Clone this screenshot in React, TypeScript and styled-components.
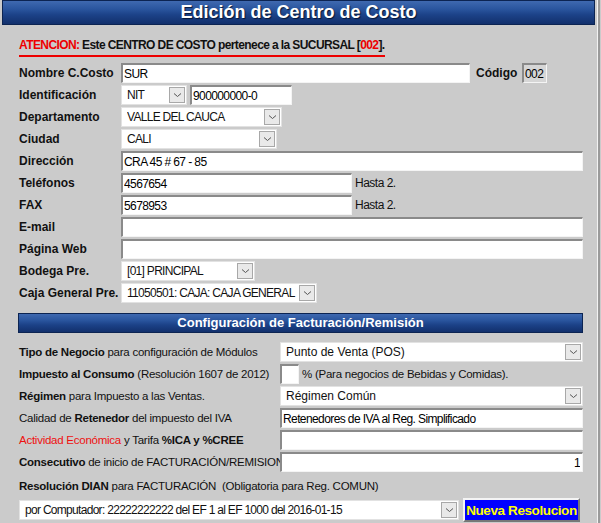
import styled, { createGlobalStyle } from "styled-components";

const GlobalStyle = createGlobalStyle`
  body {
    margin: 0;
    background: #cbcbcb;
    font-family: "Liberation Sans", Arial, sans-serif;
    color: #111;
  }
`;

const Page = styled.div`
  width: 597px;
  min-height: 523px;
  background: #cbcbcb;
  border-right: 1px solid #f2f2f2;
  box-shadow: 2px 0 0 #9a9a9a;
  padding-bottom: 20px;
`;

const TitleBar = styled.h1`
  margin: 0 2px;
  height: 25px;
  box-sizing: border-box;
  border: 1px solid #0c2452;
  background: linear-gradient(#3f69b0 0%, #2a559e 35%, #1c4288 60%, #12306c 100%);
  color: #fff;
  font-size: 18px;
  line-height: 23px;
  font-weight: bold;
  text-align: center;
  text-shadow: 1px 1px 1px #061838;
`;

const Notice = styled.div`
  display: inline-block;
  margin: 13px 0 0 19px;
  padding-bottom: 3px;
  border-bottom: 2px solid #ee0000;
  font-size: 12px;
  line-height: 14px;
  font-weight: bold;
  letter-spacing: -0.6px;
`;

const Red = styled.span`
  color: #ee0000;
`;

const Form = styled.div`
  padding: 5px 0 0 19px;
  width: 564px;
`;

const Row = styled.div<{ $h?: number }>`
  display: flex;
  align-items: center;
  height: ${({ $h }) => $h ?? 22}px;
  gap: 3px;
`;

const Label = styled.div<{ $w?: number; $ml?: number }>`
  width: ${({ $w }) => $w ?? 99}px;
  margin-left: ${({ $ml }) => $ml ?? 0}px;
  flex: none;
  font-size: 12px;
  font-weight: bold;
  white-space: nowrap;
`;

const WideLabel = styled.div`
  width: 258px;
  flex: none;
  font-size: 11.5px;
  letter-spacing: -0.25px;
  white-space: nowrap;
  b {
    font-weight: bold;
  }
`;

const TextBox = styled.input<{ $w?: number; $right?: boolean }>`
  box-sizing: border-box;
  width: ${({ $w }) => ($w ? `${$w}px` : "auto")};
  flex: ${({ $w }) => ($w ? "none" : "1")};
  min-width: 0;
  height: 20px;
  margin: 0;
  padding: 0 2px 0 1px;
  background: #fff;
  border-style: solid;
  border-width: 2px 1px 1px 2px;
  border-color: #8a8a8a #f4f4f4 #f4f4f4 #8a8a8a;
  font-family: "Liberation Sans", Arial, sans-serif;
  font-size: 12px;
  letter-spacing: -0.6px;
  color: #000;
  text-align: ${({ $right }) => ($right ? "right" : "left")};
  outline: none;
`;

const CodeBox = styled(TextBox)`
  background: #d6d6d6;
  padding: 0 1px;
`;

const Combo = styled.div<{ $w?: number; $loose?: boolean }>`
  box-sizing: border-box;
  width: ${({ $w }) => ($w ? `${$w}px` : "auto")};
  flex: ${({ $w }) => ($w ? "none" : "1")};
  height: 20px;
  display: flex;
  align-items: center;
  background: #fff;
  border: 1px solid #e2e2e2;
  font-size: 12px;
  letter-spacing: ${({ $loose }) => ($loose ? "0" : "-0.7px")};
  padding-left: 5px;
  overflow: hidden;
  white-space: nowrap;
`;

const ComboText = styled.span`
  flex: 1;
  overflow: hidden;
`;

const Arrow = styled.span`
  flex: none;
  width: 16px;
  height: 16px;
  margin-right: 1px;
  box-sizing: border-box;
  border: 1px solid #a8a8a8;
  background: #e9e9e9;
  display: flex;
  align-items: center;
  justify-content: center;
`;

const Note = styled.span<{ $small?: boolean }>`
  font-size: ${({ $small }) => ($small ? "11.5px" : "12px")};
  letter-spacing: ${({ $small }) => ($small ? "-0.25px" : "-0.5px")};
  white-space: nowrap;
`;

const SectionBar = styled.div`
  margin: 9px 0 8px -1px;
  height: 20px;
  box-sizing: border-box;
  border: 1px solid #0c2452;
  background: linear-gradient(#3f69b0 0%, #2a559e 35%, #1c4288 60%, #12306c 100%);
  color: #fff;
  font-size: 13px;
  font-weight: bold;
  line-height: 18px;
  text-align: center;
`;

const Hot = styled.span`
  color: #ee1111;
`;

const ResolutionButton = styled.button`
  flex: none;
  height: 24px;
  width: 117px;
  margin-left: 1px;
  padding: 0;
  background: #0000ff;
  color: #ffff00;
  font-family: "Liberation Sans", Arial, sans-serif;
  font-size: 13.5px;
  letter-spacing: -0.4px;
  white-space: nowrap;
  font-weight: bold;
  border-style: solid;
  border-width: 2px;
  border-color: #f4f4f4 #777 #777 #f4f4f4;
`;

function Chevron() {
  return (
    <svg width="9" height="6" viewBox="0 0 9 6">
      <path d="M1 1.5 L4.5 4.5 L8 1.5" fill="none" stroke="#555" strokeWidth="1" />
    </svg>
  );
}

function Select({ value, width, loose }: { value: string; width?: number; loose?: boolean }) {
  return (
    <Combo $w={width} $loose={loose}>
      <ComboText>{value}</ComboText>
      <Arrow>
        <Chevron />
      </Arrow>
    </Combo>
  );
}

export default function App() {
  return (
    <Page>
      <GlobalStyle />
      <TitleBar>Edición de Centro de Costo</TitleBar>
      <Notice>
        <Red>ATENCION:</Red> Este CENTRO DE COSTO pertenece a la SUCURSAL [<Red>002</Red>].
      </Notice>

      <Form>
        <Row>
          <Label>Nombre C.Costo</Label>
          <TextBox $w={349} defaultValue="SUR" readOnly />
          <Label $w={43} $ml={3}>Código</Label>
          <CodeBox $w={25} defaultValue="002" readOnly />
        </Row>
        <Row>
          <Label>Identificación</Label>
          <Select value="NIT" width={66} />
          <TextBox $w={102} defaultValue="900000000-0" readOnly />
        </Row>
        <Row>
          <Label>Departamento</Label>
          <Select value="VALLE DEL CAUCA" width={161} />
        </Row>
        <Row>
          <Label>Ciudad</Label>
          <Select value="CALI" width={156} />
        </Row>
        <Row>
          <Label>Dirección</Label>
          <TextBox defaultValue="CRA 45 # 67 - 85" readOnly />
        </Row>
        <Row>
          <Label>Teléfonos</Label>
          <TextBox $w={231} defaultValue="4567654" readOnly />
          <Note>Hasta 2.</Note>
        </Row>
        <Row>
          <Label>FAX</Label>
          <TextBox $w={231} defaultValue="5678953" readOnly />
          <Note>Hasta 2.</Note>
        </Row>
        <Row>
          <Label>E-mail</Label>
          <TextBox defaultValue="" readOnly />
        </Row>
        <Row>
          <Label>Página Web</Label>
          <TextBox defaultValue="" readOnly />
        </Row>
        <Row>
          <Label>Bodega Pre.</Label>
          <Select value="[01] PRINCIPAL" width={134} />
        </Row>
        <Row>
          <Label>Caja General Pre.</Label>
          <Select value="11050501: CAJA: CAJA GENERAL" width={196} />
        </Row>

        <SectionBar>Configuración de Facturación/Remisión</SectionBar>

        <Row>
          <WideLabel>
            <b>Tipo de Negocio</b> para configuración de Módulos
          </WideLabel>
          <Select value="Punto de Venta (POS)" loose />
        </Row>
        <Row>
          <WideLabel>
            <b>Impuesto al Consumo</b> (Resolución 1607 de 2012)
          </WideLabel>
          <TextBox $w={19} defaultValue="" readOnly />
          <Note $small>% (Para negocios de Bebidas y Comidas).</Note>
        </Row>
        <Row>
          <WideLabel>
            <b>Régimen</b> para Impuesto a las Ventas.
          </WideLabel>
          <Select value="Régimen Común" loose />
        </Row>
        <Row>
          <WideLabel>
            Calidad de <b>Retenedor</b> del impuesto del IVA
          </WideLabel>
          <TextBox defaultValue="Retenedores de IVA al Reg. Simplificado" readOnly />
        </Row>
        <Row>
          <WideLabel>
            <Hot>Actividad Económica</Hot> y Tarifa <b>%ICA y %CREE</b>
          </WideLabel>
          <TextBox defaultValue="" readOnly />
        </Row>
        <Row>
          <WideLabel>
            <b>Consecutivo</b> de inicio de FACTURACIÓN/REMISION
          </WideLabel>
          <TextBox $right defaultValue="1" readOnly />
        </Row>
        <Row $h={25}>
          <WideLabel>
            <b>Resolución DIAN</b> para FACTURACIÓN&nbsp; (Obligatoria para Reg. COMUN)
          </WideLabel>
        </Row>
        <Row $h={24}>
          <Select value="por Computador: 22222222222 del EF 1 al EF 1000 del 2016-01-15" width={440} />
          <ResolutionButton>Nueva Resolucion</ResolutionButton>
        </Row>
        <Row>
          <WideLabel>
            <b>Numeración de la Factura Válida</b>
          </WideLabel>
        </Row>
      </Form>
    </Page>
  );
}
